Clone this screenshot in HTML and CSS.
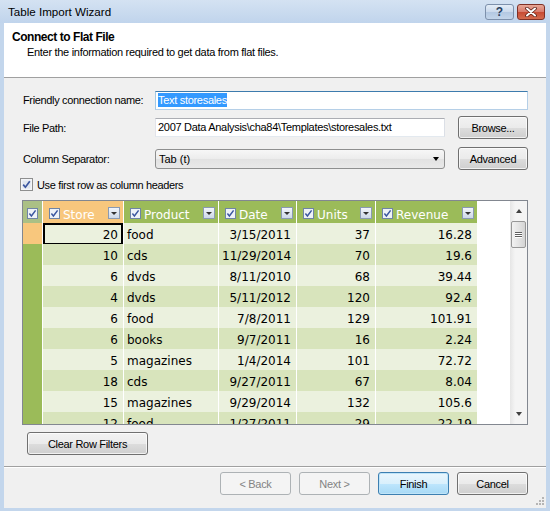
FILE: index.html
```html
<!DOCTYPE html>
<html lang="en">
<head>
  <meta charset="UTF-8" />
  <title>Table Import Wizard</title>
  <link rel="stylesheet" href="styles.css">
</head>
<body>
  <div class="window">
    <div class="titlebar">
      <span class="title">Table Import Wizard</span>
      <div class="capbtn help">?</div>
      <div class="capbtn close">
        <svg width="14" height="10" viewBox="0 0 14 10"><path d="M3 1.5l8 7M11 1.5l-8 7" stroke="#5a1f16" stroke-width="3.6" stroke-linecap="round"/><path d="M3 1.5l8 7M11 1.5l-8 7" stroke="#fff" stroke-width="2" stroke-linecap="round"/></svg>
      </div>
    </div>

    <div class="client">
      <div class="banner">
        <div class="banner-title">Connect to Flat File</div>
        <div class="banner-sub">Enter the information required to get data from flat files.</div>
      </div>

      <div class="frow first">
        <label class="flabel">Friendly connection name:</label>
        <div class="textbox focus"><span class="sel-text">Text storesales</span></div>
      </div>

      <div class="frow tall gap5">
        <label class="flabel">File Path:</label>
        <div class="textbox short">2007 Data Analysis\cha84\Templates\storesales.txt</div>
        <button class="btn side">Browse...</button>
      </div>

      <div class="frow tall gap8">
        <label class="flabel">Column Separator:</label>
        <div class="combo short"><span>Tab (t)</span><span class="combo-arrow"></span></div>
        <button class="btn side">Advanced</button>
      </div>

      <div class="chkrow">
        <svg class="chk" width="13" height="13" viewBox="0 0 13 13"><rect x=".5" y=".5" width="12" height="12" fill="#f3f5f8" stroke="#8e8f8f"/><rect x="2.5" y="2.5" width="8" height="8" fill="#dfe6ef"/><path d="M3.2 6.6l2.2 2.6 4.4-6" fill="none" stroke="#3a56a0" stroke-width="1.7"/></svg>
        <span>Use first row as column headers</span>
      </div>

      <div class="grid">
        <div class="grid-body">
          <div class="grow head">
            <div class="h corner"><svg class="hchk" viewBox="0 0 11 11"><rect x=".5" y=".5" width="10" height="10" fill="#eef2f8" stroke="#6f84a6"/><path d="M2.4 5.6l2 2.4 4.2-5.6" fill="none" stroke="#3a56a0" stroke-width="1.5"/></svg></div>
            <div class="h active"><svg class="hchk" viewBox="0 0 11 11"><rect x=".5" y=".5" width="10" height="10" fill="#eef2f8" stroke="#6f84a6"/><path d="M2.4 5.6l2 2.4 4.2-5.6" fill="none" stroke="#3a56a0" stroke-width="1.5"/></svg><span class="htext">Store</span><span class="dd"></span></div>
            <div class="h"><svg class="hchk" viewBox="0 0 11 11"><rect x=".5" y=".5" width="10" height="10" fill="#eef2f8" stroke="#6f84a6"/><path d="M2.4 5.6l2 2.4 4.2-5.6" fill="none" stroke="#3a56a0" stroke-width="1.5"/></svg><span class="htext">Product</span><span class="dd"></span></div>
            <div class="h"><svg class="hchk" viewBox="0 0 11 11"><rect x=".5" y=".5" width="10" height="10" fill="#eef2f8" stroke="#6f84a6"/><path d="M2.4 5.6l2 2.4 4.2-5.6" fill="none" stroke="#3a56a0" stroke-width="1.5"/></svg><span class="htext">Date</span><span class="dd"></span></div>
            <div class="h"><svg class="hchk" viewBox="0 0 11 11"><rect x=".5" y=".5" width="10" height="10" fill="#eef2f8" stroke="#6f84a6"/><path d="M2.4 5.6l2 2.4 4.2-5.6" fill="none" stroke="#3a56a0" stroke-width="1.5"/></svg><span class="htext">Units</span><span class="dd"></span></div>
            <div class="h"><svg class="hchk" viewBox="0 0 11 11"><rect x=".5" y=".5" width="10" height="10" fill="#eef2f8" stroke="#6f84a6"/><path d="M2.4 5.6l2 2.4 4.2-5.6" fill="none" stroke="#3a56a0" stroke-width="1.5"/></svg><span class="htext">Revenue</span><span class="dd"></span></div>
            <div class="h blank"></div>
          </div>

          <div class="grow odd cur"><div class="rsel"></div><div class="c num curcell">20</div><div class="c">food</div><div class="c num">3/15/2011</div><div class="c num">37</div><div class="c num">16.28</div><div class="c fill"></div></div>
          <div class="grow even"><div class="rsel"></div><div class="c num">10</div><div class="c">cds</div><div class="c num">11/29/2014</div><div class="c num">70</div><div class="c num">19.6</div><div class="c fill"></div></div>
          <div class="grow odd"><div class="rsel"></div><div class="c num">6</div><div class="c">dvds</div><div class="c num">8/11/2010</div><div class="c num">68</div><div class="c num">39.44</div><div class="c fill"></div></div>
          <div class="grow even"><div class="rsel"></div><div class="c num">4</div><div class="c">dvds</div><div class="c num">5/11/2012</div><div class="c num">120</div><div class="c num">92.4</div><div class="c fill"></div></div>
          <div class="grow odd"><div class="rsel"></div><div class="c num">6</div><div class="c">food</div><div class="c num">7/8/2011</div><div class="c num">129</div><div class="c num">101.91</div><div class="c fill"></div></div>
          <div class="grow even"><div class="rsel"></div><div class="c num">6</div><div class="c">books</div><div class="c num">9/7/2011</div><div class="c num">16</div><div class="c num">2.24</div><div class="c fill"></div></div>
          <div class="grow odd"><div class="rsel"></div><div class="c num">5</div><div class="c">magazines</div><div class="c num">1/4/2014</div><div class="c num">101</div><div class="c num">72.72</div><div class="c fill"></div></div>
          <div class="grow even"><div class="rsel"></div><div class="c num">18</div><div class="c">cds</div><div class="c num">9/27/2011</div><div class="c num">67</div><div class="c num">8.04</div><div class="c fill"></div></div>
          <div class="grow odd"><div class="rsel"></div><div class="c num">15</div><div class="c">magazines</div><div class="c num">9/29/2014</div><div class="c num">132</div><div class="c num">105.6</div><div class="c fill"></div></div>
          <div class="grow even"><div class="rsel"></div><div class="c num">12</div><div class="c">food</div><div class="c num">1/27/2011</div><div class="c num">29</div><div class="c num">22.19</div><div class="c fill"></div></div>
        </div>

        <div class="vscroll">
          <span class="arrow up"></span>
          <div class="thumb"><span></span><span></span><span></span></div>
          <div class="track"></div>
          <span class="arrow down"></span>
        </div>
      </div>

      <button class="btn clear">Clear Row Filters</button>

      <div class="footer">
        <button class="btn foot" disabled>&lt; Back</button>
        <button class="btn foot" disabled>Next &gt;</button>
        <button class="btn foot default">Finish</button>
        <button class="btn foot">Cancel</button>
        <svg class="grip" width="8" height="8" viewBox="0 0 8 8"><g fill="#b5b5b5"><rect x="6" y="0" width="2" height="2"/><rect x="3" y="3" width="2" height="2"/><rect x="6" y="3" width="2" height="2"/><rect x="0" y="6" width="2" height="2"/><rect x="3" y="6" width="2" height="2"/><rect x="6" y="6" width="2" height="2"/></g></svg>
      </div>
    </div>
  </div>
</body>
</html>
```

FILE: styles.css
```css
body {
  margin: 0;
  font-family: "Liberation Sans", Arial, sans-serif;
  font-size: 11px;
  color: #000;
}
.window {
  width: 550px;
  height: 511px;
  background: #c3d6ec;
  display: flex;
  flex-direction: column;
}

/* caption */
.titlebar {
  height: 23px;
  display: flex;
  align-items: flex-start;
  padding-left: 8px;
  background: linear-gradient(#d4e2f2, #c0d4ec);
}
.title {
  font-size: 11.6px;
  margin-top: 5px;
  flex: 1;
}
.capbtn {
  margin-top: 4px;
  height: 16px;
  box-sizing: border-box;
  display: flex;
  align-items: center;
  justify-content: center;
  border-radius: 3px;
}
.help {
  width: 29px;
  margin-right: 3px;
  border: 1px solid #7d90ab;
  background: linear-gradient(#e4edf7 0%, #cad9ec 50%, #b3c8e2 51%, #c3d5ea 100%);
  color: #2a3f5e;
  font-weight: bold;
  font-size: 12px;
}
.close {
  width: 28px;
  margin-right: 5px;
  border: 1px solid #7f3026;
  background: linear-gradient(#e7a797 0%, #d8796a 50%, #c74a33 51%, #d46b4e 100%);
}

/* client */
.client {
  flex: 1;
  margin: 0 4px 3px;
  background: #f0f0f0;
  display: flex;
  flex-direction: column;
}
.banner {
  height: 55px;
  box-sizing: border-box;
  background: #fff;
  border-bottom: 1px solid #a0a0a0;
  padding: 7px 0 0 8px;
}
.banner-title {
  font-weight: bold;
  font-size: 12px;
  letter-spacing: -0.45px;
  line-height: 15px;
}
.banner-sub {
  padding-left: 15px;
  line-height: 15px;
  letter-spacing: -0.3px;
}

/* form rows */
.frow {
  display: flex;
  align-items: center;
  height: 22px;
  padding: 0 18px 0 19px;
}
.frow.first { margin-top: 11px; }
.frow.tall { height: 23px; }
.frow.gap5 { margin-top: 5px; }
.frow.gap8 { margin-top: 8px; }
.flabel {
  width: 132px;
  letter-spacing: -0.35px;
}
.textbox {
  flex: 1;
  height: 19px;
  box-sizing: border-box;
  border: 1px solid #abadb3;
  border-color: #abadb3 #dbdfe6 #e3e9ef #e2e3ea;
  background: #fff;
  padding: 0 2px;
  line-height: 17px;
  letter-spacing: -0.3px;
  white-space: nowrap;
  overflow: hidden;
}
.textbox.focus {
  border-color: #3d7bad #b5cfe7 #b5cfe7 #a4c9e3;
}
.textbox.short,
.combo.short {
  flex: none;
  width: 290px;
}
.sel-text {
  background: #3399ff;
  color: #fff;
  padding: 1px 0;
}
.combo {
  height: 20px;
  box-sizing: border-box;
  border: 1px solid #8e8f8f;
  border-radius: 3px;
  background: linear-gradient(#f7f7f7 0%, #ececec 50%, #e2e2e2 51%, #e9e9e9 100%);
  display: flex;
  align-items: center;
  justify-content: space-between;
  padding: 0 5px 0 3px;
}
.combo-arrow {
  border-left: 3.5px solid transparent;
  border-right: 3.5px solid transparent;
  border-top: 4px solid #000;
}

/* buttons */
.btn {
  font-family: "Liberation Sans", Arial, sans-serif;
  font-size: 11px;
  letter-spacing: -0.3px;
  color: #000;
  height: 23px;
  box-sizing: border-box;
  border: 1px solid #707070;
  border-radius: 3px;
  background: linear-gradient(#f2f2f2 0%, #ebebeb 50%, #dddddd 51%, #cfcfcf 100%);
  box-shadow: inset 0 0 0 1px rgba(255, 255, 255, 0.7);
  padding: 0;
}
.btn.side {
  width: 70px;
  margin-left: 13px;
}
.btn:disabled {
  border-color: #adb2b5;
  background: #f4f4f4;
  color: #838383;
  box-shadow: none;
}
.btn.default {
  border-color: #3c7fb1;
  background: linear-gradient(#eaf6fd 0%, #d9f0fc 50%, #bee6fd 51%, #a7d9f5 100%);
  box-shadow: inset 0 0 0 1px #bfe4f8;
}
.btn.clear {
  width: 121px;
  margin: 7px 0 0 23px;
}

/* checkbox row */
.chkrow {
  display: flex;
  align-items: center;
  height: 15px;
  margin-top: 7px;
  padding-left: 16px;
  letter-spacing: -0.35px;
}
.chk {
  margin-right: 4px;
}

/* data grid */
.grid {
  margin: 8px 18px 0 18px;
  height: 225px;
  box-sizing: border-box;
  border: 1px solid #828790;
  display: flex;
  background: #fff;
}
.grid-body {
  width: 488px;
  overflow: hidden;
  font-family: "DejaVu Sans", Verdana, sans-serif;
  font-size: 12px;
}
.grow {
  display: grid;
  grid-template-columns: 20px 81px 95px 78px 79px 102px 33px;
  height: 21px;
}
.grow > div {
  box-sizing: border-box;
  border-right: 1px solid #fff;
  border-bottom: 1px solid #fff;
  line-height: 20px;
  white-space: nowrap;
}
.grow.head {
  height: 22px;
}
.h {
  background: #9bbb59;
  color: #fff;
  display: flex;
  align-items: center;
  padding: 0 3px 0 6px;
}
.h.corner {
  background: #abc085;
  justify-content: center;
  padding: 0;
}
.h.active {
  background: #f8c77d;
}
.h.blank {
  background: #fff;
  border-right: none;
}
.hchk {
  width: 11px;
  height: 11px;
  flex: none;
}
.htext {
  flex: 1;
  margin-left: 3px;
  line-height: 20px;
  padding-top: 4px;
}
.dd {
  width: 12px;
  height: 12px;
  box-sizing: border-box;
  border: 1px solid #8a9ab3;
  background: linear-gradient(#f2f5fa, #cdd8e8);
  display: flex;
  align-items: center;
  justify-content: center;
}
.dd::after {
  content: "";
  border-left: 3px solid transparent;
  border-right: 3px solid transparent;
  border-top: 3px solid #333;
}
.rsel {
  background: #9bbb59;
}
.cur .rsel {
  background: #f8c77d;
}
.c {
  padding: 2px 3px 0;
}
.c.num {
  text-align: right;
  padding-right: 5px;
}
.odd .c { background: #ebf1de; }
.even .c { background: #d8e4bc; }
.grow .c.fill {
  background: #fff;
  border-right: none;
  border-bottom-color: #f3f3f3;
}
.c.curcell {
  box-shadow: inset 0 0 0 2px #000;
}

/* vertical scrollbar */
.vscroll {
  width: 17px;
  background: linear-gradient(90deg, #e5e5e5, #f4f4f4 30%, #f4f4f4);
  display: flex;
  flex-direction: column;
  align-items: center;
}
.arrow {
  width: 0;
  height: 0;
  border-left: 3.5px solid transparent;
  border-right: 3.5px solid transparent;
}
.arrow.up {
  margin-top: 8px;
  border-bottom: 4px solid #404040;
}
.arrow.down {
  margin-bottom: 8px;
  border-top: 4px solid #404040;
}
.thumb {
  margin-top: 8px;
  width: 15px;
  height: 27px;
  box-sizing: border-box;
  border: 1px solid #979797;
  border-radius: 2px;
  background: linear-gradient(90deg, #f2f2f2, #e4e4e4 50%, #d4d4d4);
  display: flex;
  flex-direction: column;
  align-items: center;
  justify-content: center;
  gap: 1px;
}
.thumb span {
  width: 7px;
  height: 1px;
  background: #5f5f5f;
  box-shadow: 0 1px 0 #fff;
}
.track {
  flex: 1;
}

/* bottom buttons */
.footer {
  margin-top: 11px;
  flex: 1;
  border-top: 1px solid #a0a0a0;
  box-shadow: inset 0 1px 0 #fff;
  display: flex;
  justify-content: flex-end;
  align-items: flex-start;
  gap: 8px;
  padding: 5px 2px 0 0;
}
.btn.foot {
  width: 71px;
}
.grip {
  align-self: flex-end;
  margin-bottom: 3px;
}
```
